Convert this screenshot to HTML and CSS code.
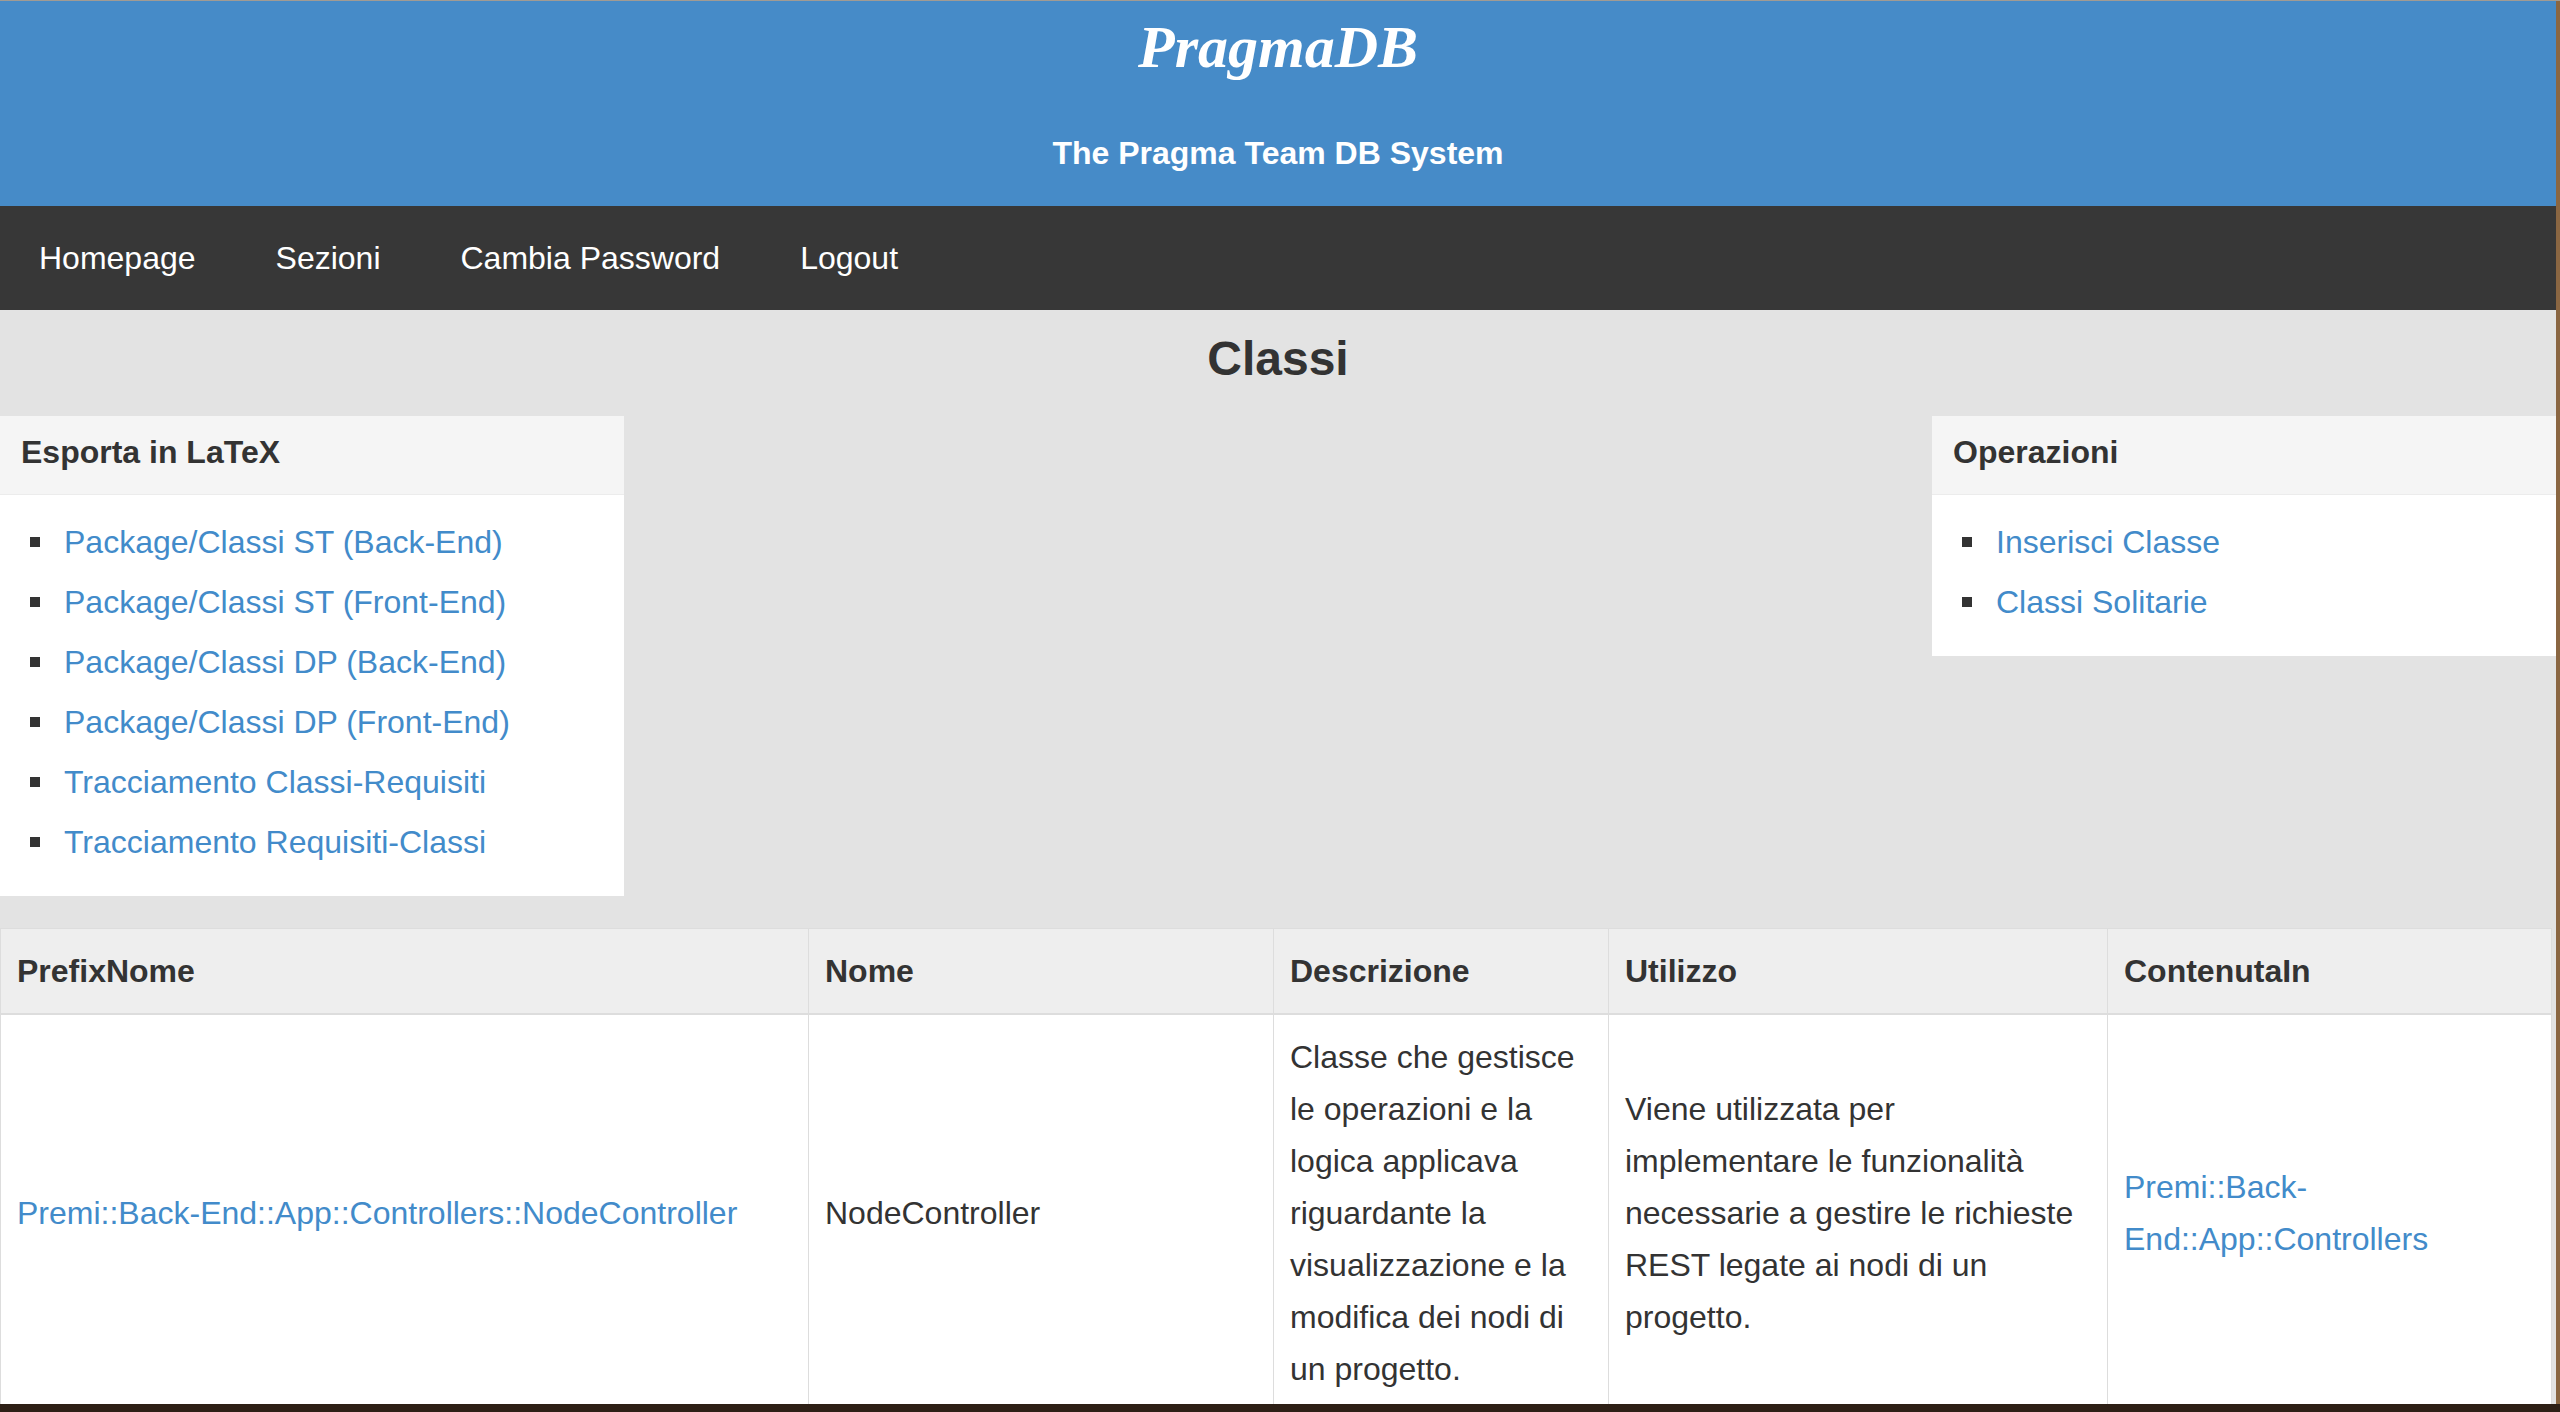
FILE: index.html
```html
<!DOCTYPE html>
<html lang="it">
<head>
<meta charset="utf-8">
<title>PragmaDB - Classi</title>
<link rel="stylesheet" href="styles.css">
</head>
<body>
<div class="window">
  <header class="banner">
    <h1 class="brand">PragmaDB</h1>
    <p class="tagline">The Pragma Team DB System</p>
  </header>
  <nav class="menu">
    <a href="#">Homepage</a>
    <a href="#">Sezioni</a>
    <a href="#">Cambia Password</a>
    <a href="#">Logout</a>
  </nav>
  <main class="content">
    <h2 class="page-title">Classi</h2>
    <div class="panels">
      <section class="panel">
        <h3 class="panel-heading">Esporta in LaTeX</h3>
        <ul class="panel-list">
          <li><a href="#">Package/Classi ST (Back-End)</a></li>
          <li><a href="#">Package/Classi ST (Front-End)</a></li>
          <li><a href="#">Package/Classi DP (Back-End)</a></li>
          <li><a href="#">Package/Classi DP (Front-End)</a></li>
          <li><a href="#">Tracciamento Classi-Requisiti</a></li>
          <li><a href="#">Tracciamento Requisiti-Classi</a></li>
        </ul>
      </section>
      <section class="panel">
        <h3 class="panel-heading">Operazioni</h3>
        <ul class="panel-list">
          <li><a href="#">Inserisci Classe</a></li>
          <li><a href="#">Classi Solitarie</a></li>
        </ul>
      </section>
    </div>
    <table class="data">
      <colgroup>
        <col class="c-prefix">
        <col class="c-nome">
        <col class="c-desc">
        <col class="c-uso">
        <col class="c-cont">
      </colgroup>
      <thead>
        <tr>
          <th>PrefixNome</th>
          <th>Nome</th>
          <th>Descrizione</th>
          <th>Utilizzo</th>
          <th>ContenutaIn</th>
        </tr>
      </thead>
      <tbody>
        <tr>
          <td><a href="#">Premi::Back-End::App::Controllers::NodeController</a></td>
          <td>NodeController</td>
          <td>Classe che gestisce le operazioni e la logica applicava riguardante la visualizzazione e la modifica dei nodi di un progetto.</td>
          <td>Viene utilizzata per implementare le funzionalità necessarie a gestire le richieste REST legate ai nodi di un progetto.</td>
          <td><a href="#">Premi::Back-End::App::Controllers</a></td>
        </tr>
      </tbody>
    </table>
  </main>
</div>
</body>
</html>
```

FILE: styles.css
```css
html, body {
  margin: 0;
  padding: 0;
}

body {
  background: #2d1f15;
  border-top: 1px solid #a19b93;
  height: 1411px;
  overflow: hidden;
  font-family: "Liberation Sans", Arial, Helvetica, sans-serif;
  color: #333;
}

.window {
  width: 2556px;
  height: 1403px;
  overflow: hidden;
  background: #e3e3e3;
  border-right: 4px solid #8a6642;
}

a {
  color: #428bca;
  text-decoration: none;
}

.banner {
  background: #468bc8;
  height: 205px;
  padding-top: 16px;
  box-sizing: border-box;
  text-align: center;
  color: #fff;
}

.brand {
  margin: 0;
  font-family: "Liberation Serif", "Times New Roman", serif;
  font-style: italic;
  font-weight: bold;
  font-size: 60px;
  line-height: 60px;
}

.tagline {
  margin: 50px 0 0;
  font-weight: bold;
  font-size: 32px;
  line-height: 52px;
}

.menu {
  display: flex;
  background: #373737;
  height: 104px;
}

.menu a {
  color: #fff;
  font-size: 32px;
  line-height: 104px;
  padding: 0 40px 0 39px;
}

.menu a + a {
  padding-left: 40px;
}

.content {
  padding-top: 17px;
}

.page-title {
  margin: 0;
  text-align: center;
  font-size: 48px;
  line-height: 64px;
  font-weight: bold;
  color: #333;
}

.panels {
  display: flex;
  justify-content: space-between;
  align-items: flex-start;
  margin-top: 25px;
}

.panel {
  width: 624px;
  background: #fff;
}

.panel-heading {
  margin: 0;
  background: #f5f5f5;
  border-bottom: 1px solid #ececec;
  padding: 10px 21px 16px;
  font-size: 32px;
  line-height: 52px;
  font-weight: bold;
  color: #333;
}

.panel-list {
  list-style: none;
  margin: 0;
  padding: 17px 0 24px 30px;
}

.panel-list li {
  display: flex;
  align-items: center;
  font-size: 32px;
  line-height: 60px;
}

.panel-list li::before {
  content: "";
  width: 10px;
  height: 10px;
  background: #333;
  margin-right: 24px;
  flex: none;
}

.data {
  margin-top: 32px;
  width: 2551px;
  table-layout: fixed;
  border-collapse: collapse;
  background: #fff;
  font-size: 32px;
  line-height: 52px;
}

.c-prefix { width: 808px; }
.c-nome { width: 465px; }
.c-desc { width: 335px; }
.c-uso { width: 499px; }
.c-cont { width: 444px; }

.data th,
.data td {
  border: 1px solid #ddd;
  padding: 16px;
  text-align: left;
}

.data th {
  background: #eee;
  font-weight: bold;
  color: #333;
  border-bottom: 2px solid #ddd;
  vertical-align: bottom;
}

.data td {
  vertical-align: middle;
  color: #333;
}
```
